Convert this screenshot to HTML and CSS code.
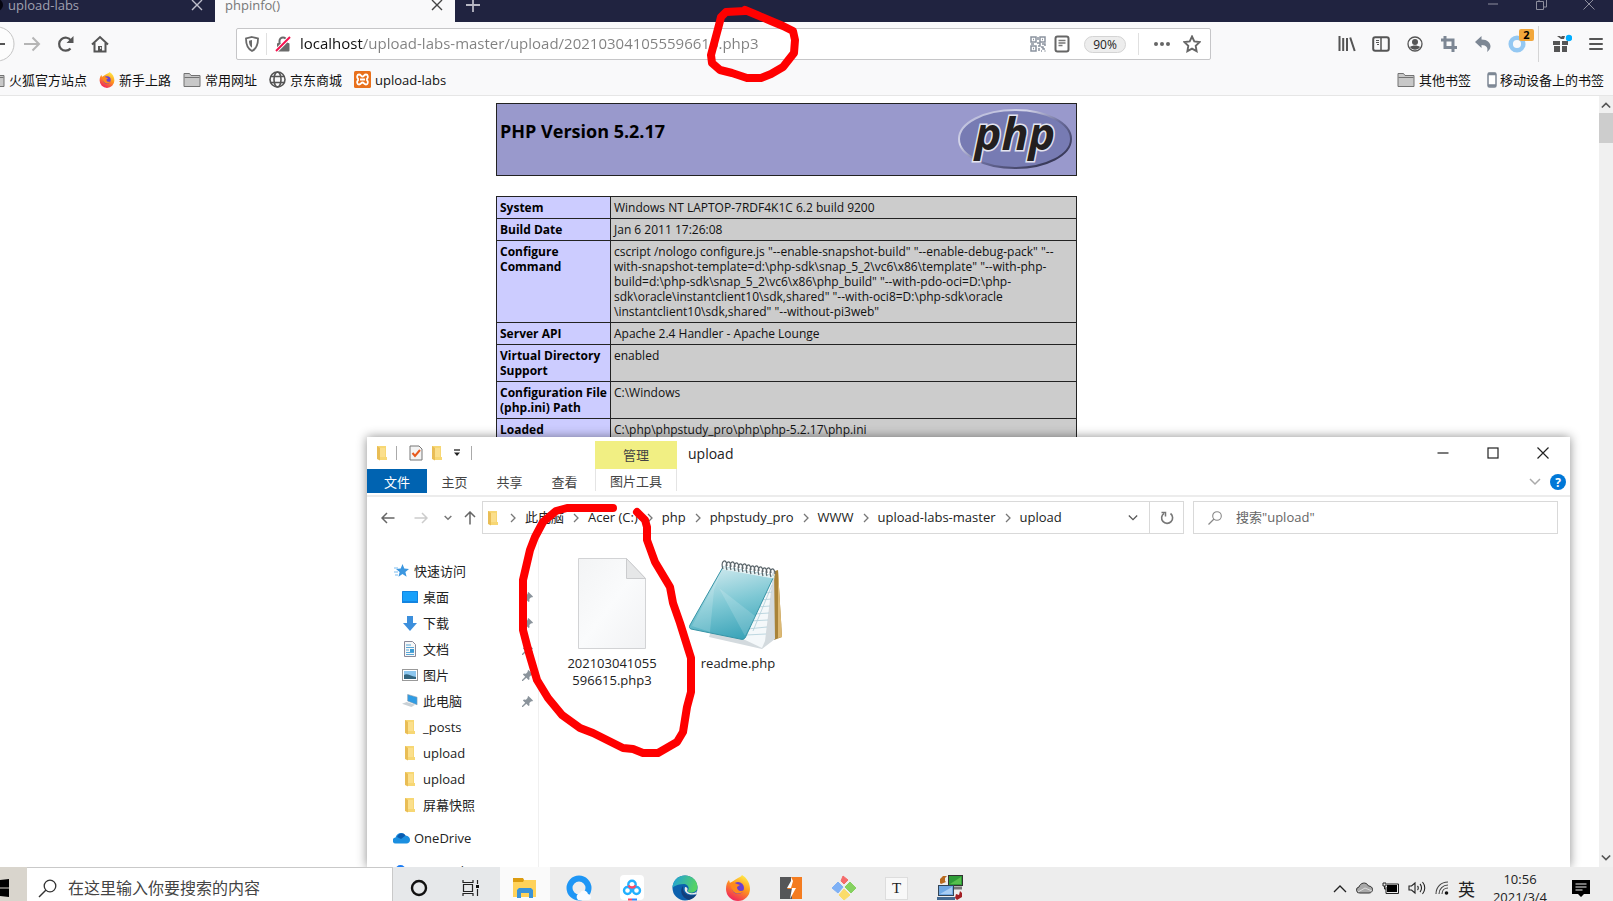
FILE: index.html
```html
<!DOCTYPE html>
<html lang="zh-CN">
<head>
<meta charset="utf-8">
<title>phpinfo()</title>
<link rel="stylesheet" href="styles.css">
</head>
<body>
<svg class="sprite" aria-hidden="true">
  <symbol id="folder" viewBox="0 0 12 16"><path d="M1 1h9v11h1v3H4l-3-2z" fill="#f7d774"/><path d="M1 1l3 2v12.500L1 14z" fill="#e9bd55"/><path d="M4 3h5v9H4z" fill="#fbdf8c"/></symbol>
  <symbol id="gfolder" viewBox="0 0 18 16"><path d="M1 14.500V1.500h5.500l1.500 2h9v11z" fill="#c8c8c8" stroke="#737373"/><path d="M1.500 5.500h15" stroke="#737373"/></symbol>
  <symbol id="pin" viewBox="0 0 12 12"><path d="M7 0l5 5-1 1-1-.3-2 2 .2 2.300-1 1-2.500-2.500L1 12H0v-1l3.500-3.700L1 4.800l1-1 2.300.2 2-2L6 1z" fill="#8a939b"/></symbol>
  <symbol id="sep" viewBox="0 0 6 10"><path d="M1 1l4 4-4 4" fill="none" stroke="#777" stroke-width="1.300"/></symbol>
  <symbol id="x" viewBox="0 0 12 12"><path d="M1 1l10 10M11 1L1 11" fill="none" stroke="currentColor" stroke-width="1.400"/></symbol>
  <symbol id="down" viewBox="0 0 12 8"><path d="M1 1l5 5 5-5" fill="none" stroke="currentColor" stroke-width="1.500"/></symbol>
  <symbol id="fox" viewBox="0 0 26 26">
    <path d="M13 3c3-1 4-3 4-3 5 3 8 8 8 14a12 12 0 0 1-24 0c0-4 1-7 3-9l1 3c3-2 5-3 8-5z" fill="url(#foxg)"/>
    <circle cx="13" cy="13" r="6" fill="#6a3fd0"/><path d="M5 8c3-1 5 0 7 1l3 1-3 2c0 4 4 5 7 3-1 4-8 5-11 1-2-3-2-5-3-8z" fill="#ff8a1c"/>
  </symbol>
  <defs><linearGradient id="foxg" x1=".8" y1="0" x2=".3" y2="1"><stop offset="0" stop-color="#fff04a"/><stop offset=".45" stop-color="#ff9a1c"/><stop offset="1" stop-color="#f0205f"/></linearGradient></defs>
</svg>
<div class="browser">
  <header class="tabs">
    <div class="tab"><svg class="tab-dot" width="4" height="14" viewBox="0 0 4 14"><circle cx="-3" cy="7" r="6" fill="#050510"/></svg><button class="tab-name">upload-labs</button><button class="close" aria-label="关闭标签页"><svg width="12" height="12"><use href="#x"/></svg></button></div>
    <div class="tab active"><button class="tab-name">phpinfo()</button><button class="close" aria-label="关闭标签页"><svg width="12" height="12"><use href="#x"/></svg></button></div>
    <button class="newtab" aria-label="新建标签页"><svg width="16" height="16" viewBox="0 0 16 16"><path d="M8 1v14M1 8h14" stroke="#b8b8c4" stroke-width="1.800"/></svg></button>
    <div class="wincaps">
      <button aria-label="最小化"><svg width="12" height="12" viewBox="0 0 12 12"><path d="M1 6h10" stroke="#8d8e9d"/></svg></button>
      <button aria-label="还原"><svg width="12" height="12" viewBox="0 0 12 12"><path d="M1.500 3.500h7v8h-7zM4 3V.5h7.500V9H9" fill="none" stroke="#8d8e9d"/></svg></button>
      <button aria-label="关闭"><svg width="12" height="12" viewBox="0 0 12 12"><path d="M.5.500l11 11M11.500.500l-11 11" stroke="#8d8e9d"/></svg></button>
    </div>
  </header>
  <nav class="toolbar">
    <div class="nav-left">
      <button class="back" aria-label="后退"><svg width="32" height="36" viewBox="0 0 32 36"><circle cx="-3" cy="18" r="17" fill="#fdfdfd" stroke="#c4c4c4"/><path d="M-2 18h7" stroke="#555" stroke-width="2"/></svg></button>
      <button aria-label="前进"><svg width="18" height="16" viewBox="0 0 18 16"><path d="M1 8h15M9.500 1.500L16 8l-6.500 6.500" fill="none" stroke="#b5b5b5" stroke-width="2"/></svg></button>
      <button aria-label="刷新"><svg width="18" height="18" viewBox="0 0 18 18"><path d="M13.500 13.500A6.500 6.500 0 1 1 14 5.500" fill="none" stroke="#555" stroke-width="2.200"/><path d="M16.500 1v7H9.500z" fill="#555"/></svg></button>
      <button aria-label="主页"><svg width="18" height="18" viewBox="0 0 18 18"><path d="M1 9.500L9 2l8 7.500M3.500 8v8.500h11V8" fill="none" stroke="#555" stroke-width="2"/><path d="M7 17v-6h4v6z" fill="#555"/><path d="M9.700 12v2" stroke="#fff"/></svg></button>
    </div>
    <div class="urlbar">
      <svg class="shield" width="16" height="16" viewBox="0 0 16 16"><path d="M8 1l6 1.500c0 6-1 10-6 12.500C3 12.500 2 8.500 2 2.500z" fill="none" stroke="#6a6a6a" stroke-width="1.800"/><path d="M8 4l-3 .8c0 3.500.8 5.500 3 7z" fill="#6a6a6a"/></svg>
      <span class="vline"></span>
      <svg class="lock" width="16" height="16" viewBox="0 0 16 16"><path d="M4.500 8V5a3.500 3.500 0 0 1 7 0v3" fill="none" stroke="#6a6a6a" stroke-width="2"/><rect x="2" y="7" width="12.500" height="8.500" rx="1" fill="#6a6a6a"/><path d="M1 15L15 1" stroke="#fff" stroke-width="4"/><path d="M1 15L15 1" stroke="#f5124f" stroke-width="2"/></svg>
      <input class="url" aria-label="地址" value="localhost/upload-labs-master/upload/202103041055596615.php3">
      <button aria-label="二维码"><svg width="16" height="16" viewBox="0 0 16 16" fill="none" stroke="#8a929e" stroke-width="1.500"><path d="M1 1h5v5H1zM10 1h5v5h-5zM1 10h5v5H1z"/><path d="M3 3.500h1M12 3.500h1M3 12.500h1M8 1v3M7 7h3v3H8M9 12v3M12 8h3v2M11 11h2v2h2M11 15h1M14.500 15h1M1 8h3"/></svg></button>
      <button aria-label="阅读模式"><svg width="16" height="18" viewBox="0 0 16 18"><rect x="1.500" y="1.500" width="13" height="15" rx="2" fill="#fff" stroke="#666" stroke-width="2"/><path d="M4.500 5.500h7M4.500 8h7M4.500 10.500h4" stroke="#777" stroke-width="1.300"/></svg></button>
      <button class="zoomlevel">90%</button>
      <span class="vline"></span>
      <button class="dots" aria-label="页面操作"><svg width="18" height="6" viewBox="0 0 18 6" fill="#666"><circle cx="3" cy="3" r="2"/><circle cx="9" cy="3" r="2"/><circle cx="15" cy="3" r="2"/></svg></button>
      <button aria-label="加入书签"><svg width="18" height="18" viewBox="0 0 18 18"><path d="M9 1.500l2.300 4.900 5.200.7-3.800 3.700.9 5.400L9 13.600l-4.600 2.600.9-5.400L1.500 7.100l5.200-.7z" fill="none" stroke="#666" stroke-width="1.900"/></svg></button>
    </div>
    <div class="tools">
      <button aria-label="书库"><svg width="18" height="16" viewBox="0 0 18 16"><path d="M1.500 0v15M5.200 2v13M9 2v13M12.200 1.500l4.500 13.500" stroke="#555" stroke-width="2"/></svg></button>
      <button aria-label="侧栏"><svg width="18" height="16" viewBox="0 0 18 16"><rect x="1.200" y="1.200" width="15.600" height="13.600" rx="2" fill="none" stroke="#555" stroke-width="2"/><path d="M9 2v12" stroke="#555" stroke-width="1.500"/><path d="M4 4.500h3M4 6.500h3M5 8.500h2" stroke="#555"/></svg></button>
      <button aria-label="账户"><svg width="16" height="16" viewBox="0 0 16 16"><circle cx="8" cy="8" r="7" fill="none" stroke="#555" stroke-width="1.300"/><circle cx="8" cy="6" r="3" fill="#555"/><path d="M3 11c2-2 8-2 10 0-2 3.500-8 3.500-10 0z" fill="#555"/></svg></button>
      <button aria-label="截图"><svg width="16" height="16" viewBox="0 0 16 16"><path d="M4 0v11.500h12M0 4h12v12" fill="none" stroke="#7d8794" stroke-width="3"/></svg></button>
      <button aria-label="撤销"><svg width="16" height="16" viewBox="0 0 16 16"><path d="M0 6l6.500-6v3.500c6 0 9 3.500 9 7 0 2.500-2 4.500-3.500 5.500 1.500-4-.5-7-5.500-7V12z" fill="#7d8794"/></svg></button>
      <button class="ring" aria-label="扩展"><svg width="18" height="18" viewBox="0 0 18 18"><circle cx="9" cy="9" r="6.300" fill="none" stroke="#94c8f2" stroke-width="4.500"/></svg><span class="badge">2</span></button>
      <span class="vline tall"></span>
      <button class="gift" aria-label="新功能"><svg width="20" height="20" viewBox="0 0 20 20"><path d="M1 7h7v4H1zM10 7h6v4h-6zM2 12h6v6H2zM10 12h5v6h-5zM5 2h3l1 1 1-1h3l-1 3H9z" fill="#555"/><circle cx="17" cy="4" r="3.200" fill="#00aeff"/></svg></button>
      <button aria-label="菜单"><svg width="14" height="14" viewBox="0 0 14 14"><path d="M1 2h12M1 7h12M1 12h12" stroke="#555" stroke-width="2" stroke-linecap="round"/></svg></button>
    </div>
  </nav>
  <nav class="bookmarks">
    <a href="#" class="cut"><svg width="5" height="16" viewBox="13 0 5 16"><use href="#gfolder" width="18" height="16"/></svg>火狐官方站点</a>
    <a href="#"><svg width="16" height="16"><use href="#fox"/></svg>新手上路</a>
    <a href="#"><svg width="18" height="16"><use href="#gfolder"/></svg>常用网址</a>
    <a href="#"><svg width="17" height="17" viewBox="0 0 17 17" fill="none" stroke="#555" stroke-width="1.600"><circle cx="8.500" cy="8.500" r="7.500"/><ellipse cx="8.500" cy="8.500" rx="3.500" ry="7.500"/><path d="M2 5.500h13M2 11.500h13"/></svg>京东商城</a>
    <a href="#"><svg width="17" height="17" viewBox="0 0 17 17"><rect width="17" height="17" rx="1.500" fill="#e8701c"/><path d="M5 3.500c2 0 2 2 3.500 2s1.500-2 3.500-2 2.500 3 1 4.200v1.600c1.500 1.200 1 4.200-1 4.200s-2-2-3.500-2-1.500 2-3.500 2-2.500-3-1-4.200V7.700C2.500 6.500 3 3.500 5 3.500z" fill="none" stroke="#fff" stroke-width="1.800"/><path d="M6 8.500h5" stroke="#fff" stroke-width="2"/></svg>upload-labs</a>
    <span class="grow"></span>
    <a href="#"><svg width="18" height="16"><use href="#gfolder"/></svg>其他书签</a>
    <a href="#" class="mobile"><svg width="10" height="16" viewBox="0 0 10 16"><rect x="1" y="1" width="8" height="14" rx="1.500" fill="#fff" stroke="#7d8794" stroke-width="1.500"/><path d="M1 2h8M1 13.500h8" stroke="#7d8794" stroke-width="2.500"/></svg>移动设备上的书签</a>
  </nav>
  <div class="viewport">
    <main class="page">
      <section class="banner">
        <h1>PHP Version 5.2.17</h1>
        <svg width="116" height="64" viewBox="0 0 116 64" role="img" aria-label="php">
          <defs><linearGradient id="rim" x1="0" y1="0" x2="1" y2="1"><stop offset="0" stop-color="#a9abd0"/><stop offset=".3" stop-color="#d5d6ea"/><stop offset=".55" stop-color="#6a6c9b"/><stop offset="1" stop-color="#22223a"/></linearGradient></defs>
          <ellipse cx="57" cy="31" rx="56" ry="29" fill="#777bb3" stroke="url(#rim)" stroke-width="2"/>
          <text x="57" y="42" text-anchor="middle" class="logo">php</text>
        </svg>
      </section>
      <table class="info">
        <tr><th scope="row">System</th><td>Windows NT LAPTOP-7RDF4K1C 6.2 build 9200</td></tr>
        <tr><th scope="row">Build Date</th><td>Jan 6 2011 17:26:08</td></tr>
        <tr><th scope="row">Configure Command</th><td>cscript /nologo configure.js "--enable-snapshot-build" "--enable-debug-pack" "--<br>with-snapshot-template=d:\php-sdk\snap_5_2\vc6\x86\template" "--with-php-<br>build=d:\php-sdk\snap_5_2\vc6\x86\php_build" "--with-pdo-oci=D:\php-<br>sdk\oracle\instantclient10\sdk,shared" "--with-oci8=D:\php-sdk\oracle<br>\instantclient10\sdk,shared" "--without-pi3web"</td></tr>
        <tr><th scope="row">Server API</th><td>Apache 2.4 Handler - Apache Lounge</td></tr>
        <tr><th scope="row">Virtual Directory<br>Support</th><td>enabled</td></tr>
        <tr><th scope="row">Configuration File<br>(php.ini) Path</th><td>C:\Windows</td></tr>
        <tr><th scope="row">Loaded<br>Configuration File</th><td>C:\php\phpstudy_pro\php\php-5.2.17\php.ini</td></tr>
      </table>
    </main>
    <div class="scroll"><svg width="10" height="8" viewBox="0 0 12 8"><path d="M1 7l5-5 5 5" fill="none" stroke="#555" stroke-width="2"/></svg><span class="thumb"></span><span class="grow"></span><svg width="10" height="8" viewBox="0 0 12 8"><path d="M1 1l5 5 5-5" fill="none" stroke="#555" stroke-width="2"/></svg></div>
  </div>
</div>

<section class="explorer" aria-label="upload">
  <div class="ribbon">
    <div class="ribbon-left">
      <div class="quick">
        <svg width="12" height="16"><use href="#folder"/></svg><span class="bar"></span>
        <svg class="check" width="14" height="16" viewBox="0 0 14 16"><path d="M1 1h9l3 3v11H1z" fill="#f4f4f4" stroke="#777"/><path d="M3.500 8l2.500 3 5-6" fill="none" stroke="#e8591c" stroke-width="2"/></svg>
        <svg width="12" height="16"><use href="#folder"/></svg>
        <svg class="more" width="8" height="8" viewBox="0 0 8 8"><path d="M1 1h6" stroke="#222" stroke-width="1.300"/><path d="M1 3.500h6L4 7z" fill="#222"/></svg><span class="bar"></span>
      </div>
      <div class="rtabs"><button class="file">文件</button><button>主页</button><button>共享</button><button>查看</button></div>
    </div>
    <div class="manage"><div class="manage-top">管理</div><button>图片工具</button></div>
    <div class="ribbon-right">
      <div class="titleline"><span>upload</span><span class="grow"></span>
        <button aria-label="最小化"><svg width="12" height="12" viewBox="0 0 12 12"><path d="M.5 6h11" stroke="#222" stroke-width="1.200"/></svg></button>
        <button aria-label="最大化"><svg width="12" height="12" viewBox="0 0 12 12"><rect x="1" y="1" width="10" height="10" fill="none" stroke="#222" stroke-width="1.200"/></svg></button>
        <button aria-label="关闭"><svg width="12" height="12" viewBox="0 0 12 12"><path d="M.5.500l11 11M11.500.500l-11 11" stroke="#222" stroke-width="1.200"/></svg></button>
      </div>
      <div class="helpline"><svg class="pale" width="12" height="8"><use href="#down"/></svg><button class="help" aria-label="帮助">?</button></div>
    </div>
  </div>
  <div class="addr">
    <div class="arrows">
      <button aria-label="返回"><svg width="14" height="12" viewBox="0 0 14 12"><path d="M13.500 6H1.500M6 1L1 6l5 5" fill="none" stroke="#666" stroke-width="1.500"/></svg></button>
      <button aria-label="前进"><svg width="14" height="12" viewBox="0 0 14 12"><path d="M.5 6h12M8 1l5 5-5 5" fill="none" stroke="#ccc" stroke-width="1.500"/></svg></button>
      <button class="slim" aria-label="最近"><svg width="8" height="6" viewBox="0 0 12 8"><path d="M1 1l5 5 5-5" fill="none" stroke="#777" stroke-width="2.200"/></svg></button>
      <button class="slim" aria-label="上移"><svg width="12" height="14" viewBox="0 0 12 14"><path d="M6 13.500V1.500M1 6l5-5 5 5" fill="none" stroke="#666" stroke-width="1.500"/></svg></button>
    </div>
    <div class="crumbs">
      <svg class="here" width="12" height="16"><use href="#folder"/></svg>
      <svg width="6" height="10"><use href="#sep"/></svg><a href="#">此电脑</a>
      <svg width="6" height="10"><use href="#sep"/></svg><a href="#">Acer (C:)</a>
      <svg width="6" height="10"><use href="#sep"/></svg><a href="#">php</a>
      <svg width="6" height="10"><use href="#sep"/></svg><a href="#">phpstudy_pro</a>
      <svg width="6" height="10"><use href="#sep"/></svg><a href="#">WWW</a>
      <svg width="6" height="10"><use href="#sep"/></svg><a href="#">upload-labs-master</a>
      <svg width="6" height="10"><use href="#sep"/></svg><a href="#">upload</a>
      <span class="grow"></span>
      <button class="drop" aria-label="展开"><svg width="10" height="8"><use href="#down"/></svg></button>
      <button class="reload" aria-label="刷新"><svg width="14" height="14" viewBox="0 0 14 14"><path d="M10.500 2.500A5.500 5.500 0 1 1 4 2.300" fill="none" stroke="#777" stroke-width="1.600"/><path d="M1.500 1.500h4v4" fill="none" stroke="#777" stroke-width="1.500"/></svg></button>
    </div>
    <label class="find"><svg width="14" height="14" viewBox="0 0 14 14"><circle cx="9" cy="5" r="4.300" fill="none" stroke="#888" stroke-width="1.100"/><path d="M6 8L.5 13.500" stroke="#888" stroke-width="1.200"/></svg><input aria-label="搜索" placeholder="搜索&quot;upload&quot;"></label>
  </div>
  <div class="files">
    <ul class="tree">
      <li class="root"><svg width="15" height="14" viewBox="0 0 15 14"><path d="M8.500 0l1.800 4.500 4.700.4-3.600 3 1.200 4.800-4.100-2.600-4 2.600L5.600 8 2 5l4.700-.4z" fill="#3b97e0"/><path d="M0 4h4M0 8h4M1 11h3" stroke="#7bbcf0" stroke-width="1.200"/></svg><span>快速访问</span></li>
      <li><svg width="16" height="12" viewBox="0 0 16 12"><rect width="16" height="12" rx=".5" fill="#1384e0"/><path d="M1 1h14v9H1z" fill="#19a0fa"/></svg><span>桌面</span><svg class="pin" width="11" height="11"><use href="#pin"/></svg></li>
      <li><svg width="16" height="15" viewBox="0 0 16 15"><path d="M5 0h6v7h4l-7 8-7-8h4z" fill="#3c8fdc"/></svg><span>下载</span><svg class="pin" width="11" height="11"><use href="#pin"/></svg></li>
      <li><svg width="16" height="16" viewBox="0 0 16 16"><path d="M2.500.500h8l3 3v12h-11z" fill="#f7f7f7" stroke="#889"/><path d="M4 4h5M4 6.500h8M4 9h3M4 11.500h8M4 13.500h8" stroke="#58a7d8" stroke-width="1.200"/><path d="M8 8h4v3H8z" fill="#3c9bd4"/></svg><span>文档</span><svg class="pin" width="11" height="11"><use href="#pin"/></svg></li>
      <li><svg width="16" height="12" viewBox="0 0 16 12"><rect x=".5" y=".5" width="15" height="11" fill="#fff" stroke="#999"/><path d="M2 2h12v8H2z" fill="#8cc6ee"/><path d="M2 6c3-2 6 1 12 2v2H2z" fill="#32647e"/></svg><span>图片</span><svg class="pin" width="11" height="11"><use href="#pin"/></svg></li>
      <li><svg width="16" height="14" viewBox="0 0 17 14"><path d="M6 0l10 3v8L6 7z" fill="#2f9ce4" stroke="#8b9aa5" stroke-width=".6"/><path d="M0 10l5-2 9 3-4 2.500z" fill="#c9d0d5"/></svg><span>此电脑</span><svg class="pin" width="11" height="11"><use href="#pin"/></svg></li>
      <li><svg width="16" height="16"><use href="#folder"/></svg><span>_posts</span></li>
      <li><svg width="16" height="16"><use href="#folder"/></svg><span>upload</span></li>
      <li><svg width="16" height="16"><use href="#folder"/></svg><span>upload</span></li>
      <li><svg width="16" height="16"><use href="#folder"/></svg><span>屏幕快照</span></li>
      <li class="root drive"><svg width="17" height="12" viewBox="0 0 17 12"><path d="M3 11.500a3 3 0 0 1-.5-6C3.500 1.500 9-1.500 12.500 3.500c3 .3 4.500 2 4.500 4.500 0 2-1.500 3.500-3.500 3.500z" fill="#1b8fe0"/><path d="M4 5c1.500-4 6-5.500 8.500-1.500L8 7z" fill="#0a5cb0"/></svg><span>OneDrive</span></li>
      <li class="root net"><svg width="17" height="14" viewBox="0 0 17 14"><circle cx="6.500" cy="5" r="5" fill="#1b7cf5"/><circle cx="11" cy="9" r="4" fill="#1b7cf5"/></svg><span>WPS网盘</span></li>
    </ul>
    <div class="grid">
      <figure>
        <svg width="98" height="92" viewBox="0 0 98 92"><defs><linearGradient id="pg" x1="0" y1="0" x2="1" y2="1"><stop offset="0" stop-color="#f3f4f5"/><stop offset=".5" stop-color="#fafbfc"/><stop offset="1" stop-color="#f1f2f4"/></linearGradient></defs><path d="M15.500.500h48l19 20v70h-67z" fill="url(#pg)" stroke="#d2d3d5"/><path d="M63.500.500v20h19z" fill="#e6e7e8" stroke="#cbccce"/></svg>
        <figcaption>202103041055<br>596615.php3</figcaption>
      </figure>
      <figure>
        <svg width="98" height="92" viewBox="0 0 98 92">
          <defs><linearGradient id="nb" x1=".3" y1="0" x2=".6" y2="1"><stop offset="0" stop-color="#cfe9ee"/><stop offset=".5" stop-color="#7ec8d4"/><stop offset="1" stop-color="#3aa3b8"/></linearGradient></defs>
          <path d="M86 13l3-1 4 67-8 3-6-5z" fill="#a98338"/><path d="M89 12l4 67-4 1z" fill="#dcb872"/>
          <path d="M85 12l1 69-13 10-53-12 2-6 35-3z" fill="#d3dade"/><path d="M84 17l-8 66-3 7-21-10z" fill="#f4f8fa"/>
          <path d="M83 27L64 73M83 34l-6 1M82 41l-10 1M81 48l-13 1M80 55l-15 1M79 62l-18 1M78 69l-20 2M77 76l-20 1" stroke="#b7d2dc" stroke-width=".9"/>
          <path d="M34 9l51 9L57 78c-1 3-3 4-6 3L2 71c-2-1-2-2-1-4z" fill="url(#nb)" stroke="#3794a6" stroke-width="1"/>
          <path d="M32 14L25 32l-4 42L3 68zM30 30l36 28-10 20z" fill="#fff" opacity=".16"/>
          <path d="M34 10l51 9" stroke="#e6f3f5" stroke-width="3"/>
          <path d="M34 11c-3-9 4-11 4-3M38 12c-3-9 4-11 4-3M42 12c-3-9 4-11 4-3M46 13c-3-9 4-11 4-3M50 14c-3-9 4-11 4-3M54 14c-3-9 4-11 4-3M58 15c-3-9 4-11 4-3M62 16c-3-9 4-11 4-3M66 16c-3-9 4-11 4-3M70 17c-3-9 4-11 4-3M74 18c-3-9 4-11 4-3M78 18c-3-9 4-11 4-3M82 19c-3-9 4-11 4-3" fill="none" stroke="#5c666b" stroke-width="1.200"/>
        </svg>
        <figcaption>readme.php</figcaption>
      </figure>
    </div>
  </div>
</section>

<footer class="taskbar">
  <button class="start" aria-label="开始"><svg width="10" height="18" viewBox="0 0 10 18"><path d="M0 1l9-1v8.500H0zM0 9.500h9V18l-9-1z" fill="#000"/></svg></button>
  <label class="search"><svg width="19" height="19" viewBox="0 0 19 19"><circle cx="12" cy="7" r="5.800" fill="none" stroke="#333" stroke-width="1.300"/><path d="M8 11L1 18" stroke="#333" stroke-width="1.500"/></svg><input aria-label="搜索" placeholder="在这里输入你要搜索的内容"></label>
  <div class="cool">
    <button aria-label="Cortana"><svg width="18" height="18" viewBox="0 0 18 18"><circle cx="9" cy="9" r="7" fill="none" stroke="#111" stroke-width="2.400"/></svg></button>
    <button aria-label="任务视图"><svg width="18" height="18" viewBox="0 0 18 18"><path d="M1 1v2.500h10V1M1 17v-2.500h10V17M1.500 5.500h9v7h-9zM15.500 1v4M15.500 10v7" fill="none" stroke="#222" stroke-width="1.200"/><path d="M14 6h3v3h-3z" fill="#111"/></svg></button>
  </div>
  <div class="apps">
    <button class="on" aria-label="文件资源管理器"><svg width="24" height="22" viewBox="0 0 24 22"><path d="M0 1h9l2 2h12v17H0z" fill="#ffd25a"/><path d="M0 1h10l1 2-1 2H0z" fill="#dc9c10"/><path d="M4 21v-8l2-2h12l2 2v8h-4v-5H8v5z" fill="#3a93d8"/></svg></button>
    <button aria-label="浏览器"><svg width="26" height="26" viewBox="0 0 26 26"><circle cx="13" cy="13" r="9.500" fill="none" stroke="#1e96f5" stroke-width="6"/><path d="M12 25a4 4 0 0 1 2-7c2-4 7-3 8 1 4 1 4 6 0 6z" fill="#f8fbff"/></svg></button>
    <button aria-label="网盘"><svg width="26" height="26" viewBox="0 0 26 26"><rect x="1" width="24" height="25" rx="4" fill="#fff"/><g fill="none" stroke-width="2.400"><circle cx="8.500" cy="15.500" r="3.500" stroke="#22b0ff"/><circle cx="17.500" cy="15.500" r="3.500" stroke="#22b0ff"/><circle cx="13" cy="9.500" r="3.700" stroke="#22b0ff"/><path d="M9.500 10.500a4 4 0 0 0 7 0" stroke="#ff4864"/></g><path d="M9 24.500h4" stroke="#ff4864" stroke-width="2"/><path d="M13 24.500h5" stroke="#3088ff" stroke-width="2"/></svg></button>
    <button aria-label="Edge"><svg width="26" height="26" viewBox="0 0 26 26"><defs><linearGradient id="eg" x1="0" y1="0" x2="1" y2=".3"><stop offset="0" stop-color="#1c9ee0"/><stop offset="1" stop-color="#55d265"/></linearGradient></defs><circle cx="13" cy="13" r="12.500" fill="#0c61ad"/><path d="M.5 13C1-4 25-3 25.500 12c0 6-8 7-10 4 3-3 0-7-4-7C5 9 1 12 .5 13z" fill="url(#eg)"/><path d="M11 11c-4 5-1 12 6 14 4-1 6-3 8-6-5 3-15 2-14-8z" fill="#123f7c"/><path d="M13 12c4 0 2 4 2 4 2 3 8 3 10 0l-1 3c-6 2-13-1-11-7z" fill="#ececec"/></svg></button>
    <button aria-label="Firefox"><svg width="26" height="26"><use href="#fox"/></svg></button>
    <button aria-label="Burp"><svg width="22" height="22" viewBox="0 0 22 22"><path d="M0 0h22v22H0z" fill="#f47c20"/><path d="M0 0h11v6L7 12h5v10H0z" fill="#555658"/><path d="M11 0v4L7 11h5l-2 11 6-11h-5l2-7" fill="#fff"/></svg></button>
    <button aria-label="Git"><svg width="26" height="26" viewBox="0 0 26 26" stroke-linejoin="round"><path d="M12 1l5 4-4 4-3-3z" fill="#f56b6b" stroke="#f56b6b"/><path d="M1 13l6-6 5 5-5 6z" fill="#7fb1f5" stroke="#7fb1f5"/><path d="M19 7l6 6-5 5-6-6z" fill="#86d160" stroke="#86d160"/><path d="M13 14l6 6-6 5-5-5z" fill="#fbdc6a" stroke="#fbdc6a"/></svg></button>
    <button class="typora" aria-label="Typora">T</button>
    <button aria-label="PuTTY"><svg width="26" height="26" viewBox="0 0 26 26"><rect x="11.500" y=".5" width="14" height="10" fill="#2f9c38" stroke="#333"/><path d="M13 9l11-7v7z" fill="#57c04c"/><path d="M12 13h13" stroke="#777" stroke-width="3"/><rect x="1.500" y="10.500" width="15" height="10" fill="#6fa8e4" stroke="#345"/><path d="M3 19l12-7v7z" fill="#a9cdf3"/><path d="M0 23.500h18" stroke="#456a92" stroke-width="3"/><path d="M3 8V4l3-3h4L8 3v3l1 1-5 2z" fill="#b96a20"/><path d="M18 23l1-4 3 1 1-4 2 2v4l-5 3z" fill="#a32025"/></svg></button>
  </div>
  <span class="grow"></span>
  <div class="tray">
    <svg width="14" height="9" viewBox="0 0 14 9"><path d="M1 8l6-6 6 6" fill="none" stroke="#222" stroke-width="1.300"/></svg>
    <svg width="17" height="12" viewBox="0 0 17 12"><path d="M4 11a3 3 0 0 1-1-6C4 1 10-1 12.500 4c2.500 0 4 1.500 4 3.500S15 11 13 11z" fill="#a9a9a9" stroke="#333"/><path d="M2 10l7-4 7 3" fill="none" stroke="#ddd"/></svg>
    <svg width="17" height="12" viewBox="0 0 17 12"><path d="M5 3h10v7H5z" fill="#000"/><path d="M4 5v6.500h12.500V2H5M1 1h3v3H1zM2.500 4v3H4" fill="none" stroke="#222"/></svg>
    <svg width="18" height="14" viewBox="0 0 18 14"><path d="M1 5h2.500L7 2v10L3.500 9H1zM9.500 5c1 1 1 3 0 4M12 3c2 2 2 6 0 8M14.500 1c3 3.500 3 8.500 0 12" fill="none" stroke="#222" stroke-width="1.100"/></svg>
    <svg width="14" height="14" viewBox="0 0 14 14"><path d="M1 13C1 6 6 1 13 1M4 13c0-5 4-9 9-9M7 13c0-3.500 2.500-6 6-6" fill="none" stroke="#444" stroke-width="1.100"/><circle cx="11.500" cy="12" r="1.800" fill="#111"/></svg>
    <span class="ime">英</span>
  </div>
  <div class="clock"><span>10:56</span><span>2021/3/4</span></div>
  <button class="notice" aria-label="通知"><svg width="18" height="17" viewBox="0 0 18 17"><path d="M0 0h18v14h-6l-3 3-3-3H0z" fill="#000"/><path d="M3.500 4h11M3.500 7h11M3.500 10h7" stroke="#eee"/></svg></button>
</footer>

<svg class="marks" width="1613" height="901" viewBox="0 0 1613 901" aria-hidden="true">
  <path d="M745 10L757 15 771 21 783 26 793 31 795 40 794 53 783 67 771 74 761 78 747 78 732 73 720 70 712 63 711 55 715 40 719 25 721 17 726 12 745 11"/>
  <path d="M613 508H567L556 511 543 522 535 537 530 550 523 580V630L529 653 537 680 548 698 562 715 580 728 593 733 623 748 633 749 643 753H658L677 742 683 732 687 707 691 692V658L680 623 673 603 670 587 655 562 647 540V527L645 520 637 512"/>
</svg>
</body>
</html>
```
FILE: styles.css
```css
* { box-sizing: border-box; }
body { margin: 0; height: 100vh; overflow: hidden; display: flex; flex-direction: column; position: relative; background: #fff; font-family: "Open Sans", "Noto Sans CJK SC", sans-serif; font-size: 13px; color: #1a1a1a; }
button { border: 0; padding: 0; background: none; font: inherit; color: inherit; display: flex; align-items: center; justify-content: center; }
input { border: 0; outline: 0; padding: 0; background: none; font: inherit; min-width: 0; }
a { color: inherit; text-decoration: none; }
svg { flex: none; display: block; }
.sprite { position: absolute; width: 0; height: 0; }
.grow { flex: 1; }
.browser { flex: 1; min-height: 0; display: flex; flex-direction: column; }

.tabs { height: 22px; flex: none; display: flex; background: #202340; overflow: hidden; }
.tab { width: 215px; height: 22px; display: flex; align-items: center; color: #a0a1b0; padding: 0 12px 12px 0; }
.tab-dot { margin-right: 4px; }
.tab-name { flex: 1; justify-content: flex-start; line-height: 18px; }
.tab .close { color: #c0c0cc; }
.tab.active { width: 240px; background: #f9f9fa; color: #777; padding-left: 10px; }
.tab.active .close { color: #444; }
.newtab { width: 36px; height: 10px; }
.wincaps { margin-left: auto; display: flex; height: 8px; }
.wincaps button { width: 48px; }

.toolbar { height: 44px; flex: none; display: flex; align-items: center; background: #f9f9fa; }
.nav-left { width: 236px; display: flex; align-items: center; }
.nav-left button { width: 34px; }
.nav-left .back { width: 15px; justify-content: flex-start; }
.urlbar { flex: 1; height: 32px; display: flex; align-items: center; background: #fff; border: 1px solid #c6c6c8; border-radius: 2px; padding: 0 6px 0 7px; }
.vline { width: 1px; height: 22px; background: #e0e0e0; }
.shield { margin-right: 6px; }
.lock { margin: 0 9px 0 8px; }
.url { flex: 1; font-size: 15px; line-height: 22px; padding-bottom: 2px; color: transparent; background: linear-gradient(to right, #111 63px, #808080 63px); -webkit-background-clip: text; background-clip: text; }
.urlbar button { width: 24px; flex: none; }
.urlbar .zoomlevel { width: 42px; height: 17px; margin: 0 12px 0 10px; border: 1px solid #d4d4d4; border-radius: 9px; background: #ededed; font-size: 12px; color: #222; }
.urlbar .dots { margin: 0 6px 0 11px; }
.tools { display: flex; align-items: center; margin-left: 119px; }
.tools button { width: 34px; height: 34px; }
.vline.tall { height: 36px; background: #d5d5d5; margin: 0 6px 0 4px; }
.ring { position: relative; }
.badge { position: absolute; left: 19px; top: 2px; width: 15px; height: 12px; border-radius: 2px; background: #f2a73b; color: #000; font-weight: bold; font-size: 11px; line-height: 12px; }

.bookmarks { height: 30px; flex: none; display: flex; align-items: center; gap: 12px; padding: 0 9px 2px 0; background: #f9f9fa; border-bottom: 1px solid #e6e6e6; color: #111; }
.bookmarks a { display: flex; align-items: center; gap: 4px; line-height: 20px; }
.bookmarks .mobile { gap: 3px; margin-left: 4px; }

.viewport { flex: 1; min-height: 0; display: flex; overflow: hidden; }
.page { flex: 1; overflow: hidden; padding: 7px 26px 0 0; display: flex; flex-direction: column; align-items: center; color: #111; }
.banner { width: 581px; height: 73px; flex: none; display: flex; justify-content: space-between; border: 1px solid #222; background: #9999cc; padding: 4px 2px 0 3px; }
.banner h1 { margin: 11px 0 0; font-size: 18px; line-height: 24px; color: #000; }
.logo { font: italic bold 45px "Open Sans", sans-serif; fill: #231f20; stroke: #e4e4ef; stroke-width: 3px; paint-order: stroke; }
.info { width: 581px; margin-top: 20px; border-collapse: collapse; font-size: 12px; line-height: 15px; }
.info th, .info td { border: 1px solid #222; padding: 3px; vertical-align: top; text-align: left; }
.info th { width: 114px; background: #ccccff; color: #000; }
.info td { background: #cccccc; white-space: nowrap; }
.scroll { width: 14px; background: #f0f0f0; display: flex; flex-direction: column; align-items: center; padding: 5px 0; }
.thumb { width: 14px; height: 30px; margin-top: 4px; background: #cdcdcd; }

.explorer { position: absolute; left: 367px; right: 43px; top: 437px; bottom: 34px; display: flex; flex-direction: column; background: #fff; box-shadow: 0 0 10px rgba(0,0,0,.45); overflow: hidden; color: #222; }
.ribbon { display: flex; height: 60px; flex: none; border-bottom: 2px solid #ececec; }
.ribbon-left { width: 228px; }
.quick { height: 32px; display: flex; align-items: center; padding-left: 9px; }
.bar { width: 1px; height: 14px; background: #aaa; margin: 0 12px 0 8px; }
.check { margin-right: 8px; }
.more { margin: 0 2px 0 10px; }
.rtabs { display: flex; height: 24px; }
.rtabs button { width: 55px; color: #444; }
.rtabs .file { width: 60px; background: #0063b1; color: #fff; }
.manage { width: 82px; padding-top: 4px; color: #444; text-align: center; }
.manage-top { height: 28px; line-height: 28px; background: #f1ef83; }
.manage button { width: 82px; height: 22px; border: solid #e4e4e4; border-width: 0 1px; }
.ribbon-right { flex: 1; }
.titleline { height: 32px; display: flex; align-items: center; padding: 0 2px 0 11px; font-size: 14px; }
.titleline button { width: 50px; height: 32px; }
.helpline { display: flex; justify-content: flex-end; align-items: center; gap: 9px; height: 26px; padding-right: 4px; }
.pale { color: #aaa; }
.help { width: 16px; height: 16px; border-radius: 8px; background: #0078d7; color: #fff; font-size: 12px; font-weight: bold; }
.addr { display: flex; flex: none; height: 33px; margin: 4px 12px 0 0; }
.arrows { width: 115px; display: flex; padding-left: 4px; }
.arrows button { width: 33px; }
.arrows .slim { width: 22px; }
.crumbs { width: 702px; display: flex; align-items: center; border: 1px solid #d9d9d9; padding-left: 4px; gap: 9px; white-space: nowrap; }
.crumbs a { padding-bottom: 2px; }
.here { margin-right: 2px; }
.drop { color: #555; width: 10px; margin-right: 2px; }
.reload { width: 34px; height: 31px; border-left: 1px solid #d9d9d9; }
.find { flex: 1; display: flex; align-items: center; gap: 14px; margin-left: 9px; border: 1px solid #d9d9d9; padding-left: 14px; }
.find input { flex: 1; padding-bottom: 2px; }
input::placeholder { color: #666; opacity: 1; }
.files { flex: 1; min-height: 0; display: flex; overflow: hidden; }
.tree { list-style: none; width: 172px; margin: 0; padding: 24px 5px 0 35px; border-right: 1px solid #f0f0f0; font-size: 13px; }
.tree li { display: flex; align-items: center; height: 26px; line-height: 20px; gap: 5px; }
.tree .root { margin-left: -8px; }
.tree .pin { margin-left: auto; }
.tree .drive { margin-top: 7px; margin-left: -9px; gap: 4px; }
.tree .net { margin-top: 7px; height: 28px; }
.grid { flex: 1; display: flex; gap: 28px; padding: 24px 0 0 24px; }
figure { margin: 0; width: 98px; }
figcaption { margin-top: 5px; text-align: center; line-height: 17px; font-size: 13px; }

.taskbar { height: 34px; flex: none; position: relative; overflow: hidden; display: flex; background: #ededed; color: #222; }
.taskbar > * { height: 42px; }
.start { width: 27px; background: #d9d5cd; justify-content: flex-start; }
.search { width: 366px; display: flex; align-items: center; gap: 11px; padding-left: 11px; background: #fff; border: 1px solid #c9c9c9; border-left: 0; font-size: 16px; }
.search input { flex: 1; height: 40px; }
.search input::placeholder { color: #444; }
.cool { display: flex; background: #e6e8ea; padding-right: 3px; }
.cool button { width: 52px; }
.apps { display: flex; }
.apps button { width: 53px; }
.apps .on { background: #fafafa; width: 50px; margin-right: 2px; }
.apps .typora { width: 23px; height: 23px; margin: 10px 15px; background: #f8f8f8; border: 1px solid #ddd; font-family: "Liberation Serif", serif; font-size: 15px; }
.tray { display: flex; align-items: center; gap: 9px; }
.ime { font-size: 17px; }
.clock { width: 90px; display: flex; flex-direction: column; justify-content: center; text-align: center; line-height: 18px; }
.notice { width: 32px; margin-right: 16px; }
.marks { position: absolute; left: 0; top: 0; pointer-events: none; fill: none; stroke: #ff0000; stroke-width: 8px; stroke-linecap: round; stroke-linejoin: round; }
```
